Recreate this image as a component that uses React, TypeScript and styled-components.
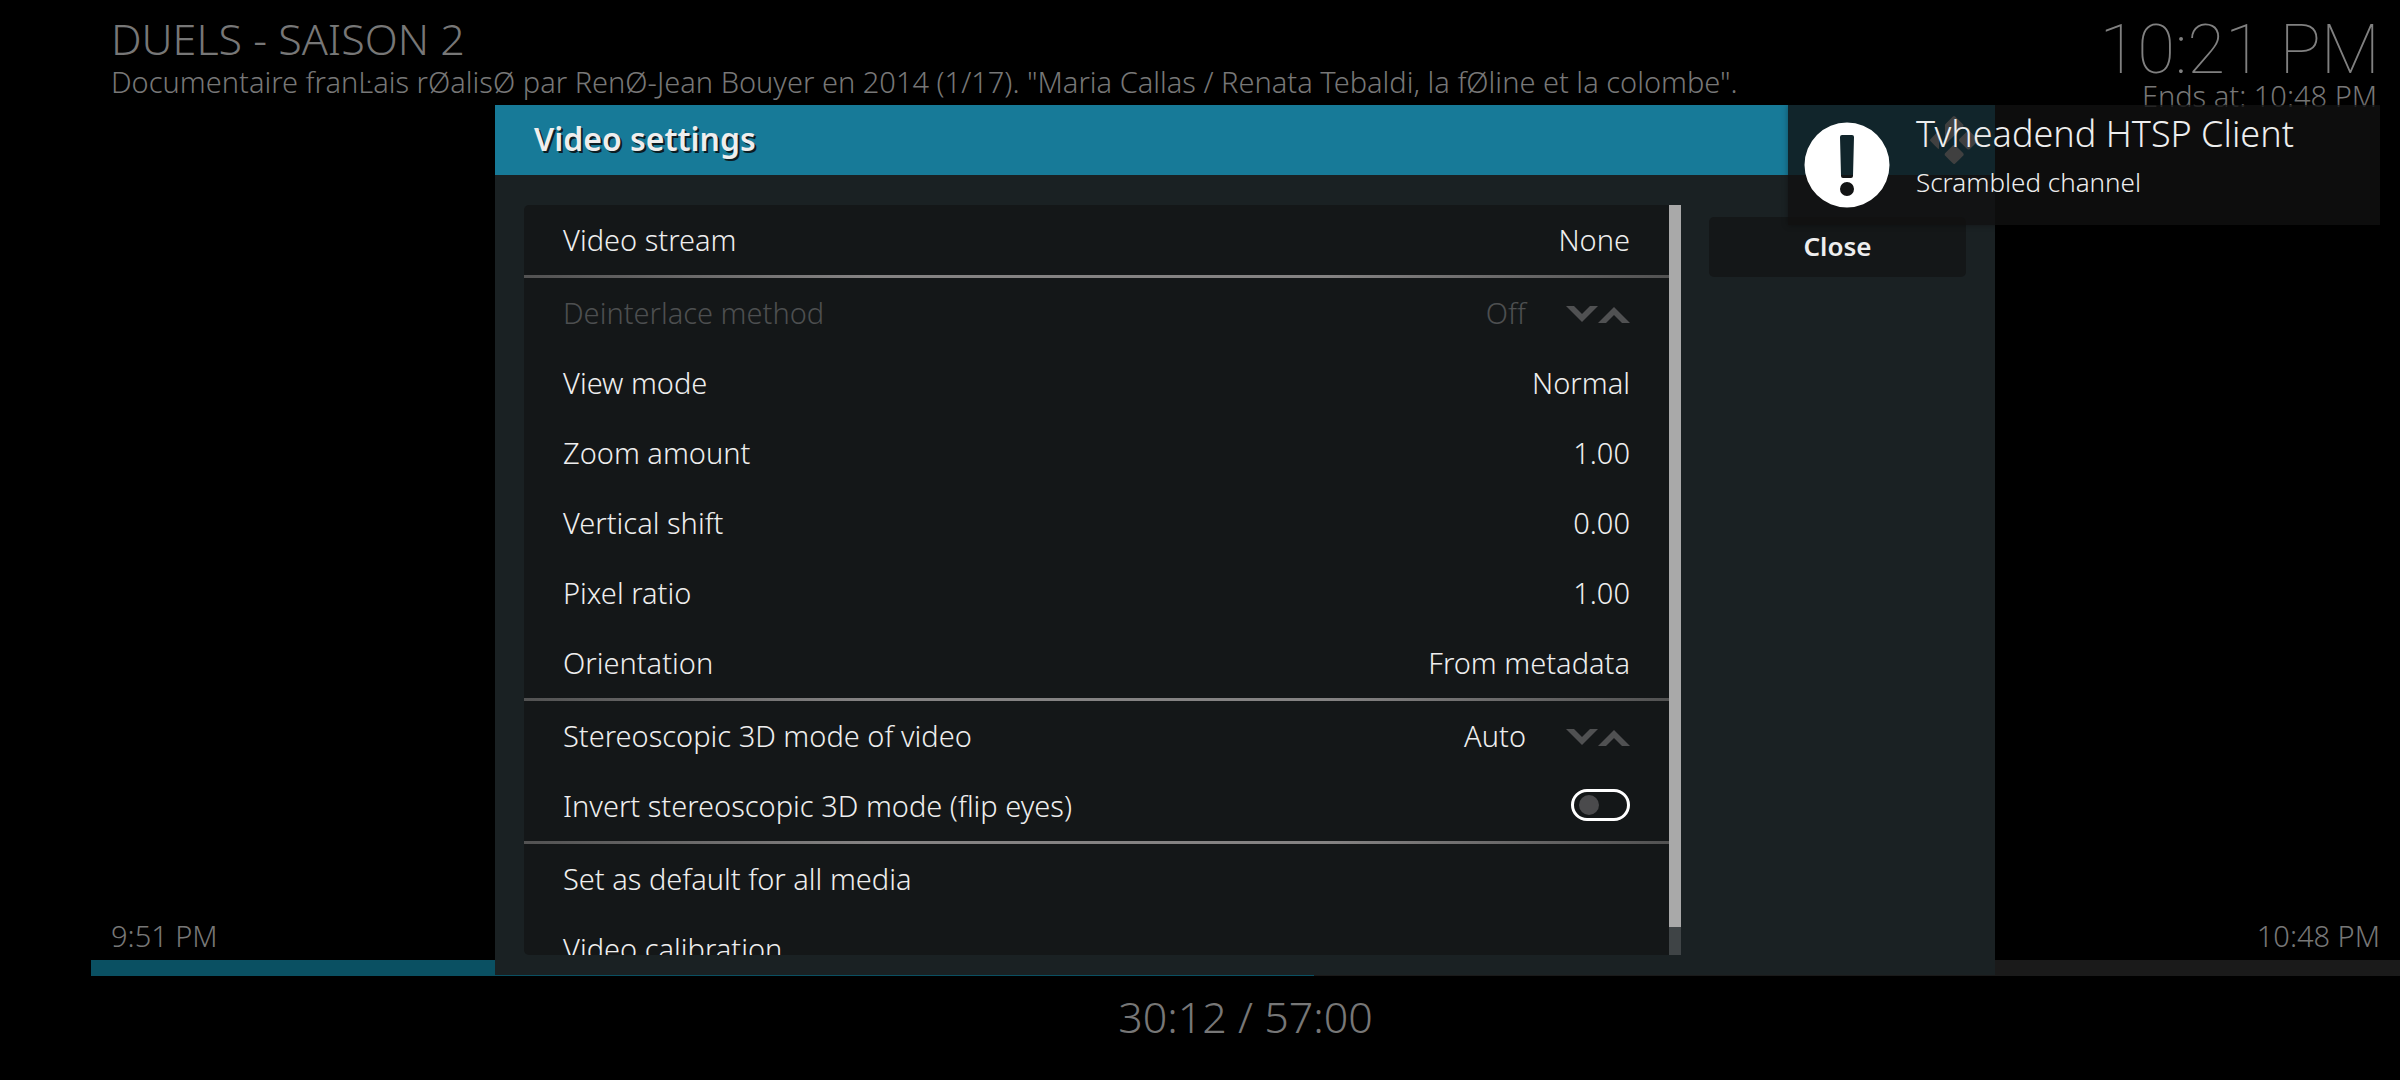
import React, { useState } from "react";
import styled, { createGlobalStyle } from "styled-components";
import { SiKodi } from "react-icons/si";

const GlobalStyle = createGlobalStyle`
  *, *::before, *::after { box-sizing: border-box; }
  body {
    margin: 0;
    background: #000;
    color: #777;
    font-family: "Noto Sans", "Open Sans", sans-serif;
    font-size: 29px;
    font-weight: 300;
  }
  h1, h2, p { margin: 0; font-weight: inherit; }
  button { font: inherit; color: inherit; background: none; border: 0; padding: 0; }
`;

/* On-screen display behind the dialog */

const Screen = styled.main`
  position: relative;
  display: flex;
  flex-direction: column;
  justify-content: space-between;
  min-height: 100vh;
  padding-left: 91px;
`;

const OsdHeader = styled.header`
  display: flex;
  justify-content: space-between;
  gap: 40px;
  padding: 16px 20px 0;
`;

const NowPlaying = styled.div`
  min-width: 0;
`;

const Title = styled.h1`
  font-size: 43px;
  line-height: 46px;
`;

const Plot = styled.p`
  line-height: 40px;
  white-space: nowrap;
  overflow: hidden;
  text-overflow: ellipsis;
`;

const ClockArea = styled.div`
  padding-top: 4px;
  text-align: right;
  white-space: nowrap;
`;

const Clock = styled.p`
  font-family: Roboto, sans-serif;
  font-size: 69px;
  font-weight: 100;
  line-height: 60px;
  color: #808080;
`;

const EndsAt = styled.p`
  padding-right: 3px;
  line-height: 32px;
`;

const OsdFooter = styled.footer`
  padding-bottom: 22px;
`;

const TimeSpan = styled.div`
  display: flex;
  justify-content: space-between;
  padding: 0 20px;
  line-height: 48px;
`;

const ProgressTrack = styled.div`
  height: 16px;
  background: #1a1a1a;
`;

const ProgressFill = styled.div`
  height: 100%;
  background: #0a5062;
`;

const Elapsed = styled.p`
  font-size: 43px;
  line-height: 82px;
  text-align: center;
`;

/* Settings dialog */

const DialogLayer = styled.div`
  position: absolute;
  inset: 0;
  display: flex;
  align-items: center;
  justify-content: center;
  padding-left: 90px;
`;

const Dialog = styled.section`
  width: min(1500px, 100%);
  background: #1a2123;
  color: #eee;
`;

const DialogHeader = styled.header`
  display: flex;
  align-items: center;
  justify-content: space-between;
  height: 70px;
  padding: 0 17px 0 39px;
  background: #177a98;
`;

const DialogTitle = styled.h2`
  padding-bottom: 4px;
  font-size: 32px;
  font-weight: 600;
  text-shadow: 2px 2px 0 #0b1d24;
`;

const DialogBody = styled.div`
  display: grid;
  grid-template-columns: minmax(0, 1fr) 257px;
  gap: 28px;
  padding: 30px 29px 20px;
`;

const ListFrame = styled.div`
  display: grid;
  grid-template-columns: minmax(0, 1fr) 12px;
  height: min(750px, calc(100vh - 330px));
`;

const List = styled.div`
  overflow: hidden;
  border-radius: 5px 0 0 5px;
  background: #141718;
`;

const Group = styled.div`
  & + & {
    border-top: 3px solid;
    border-image: linear-gradient(90deg, #525252, #858383 30%, #858383 70%, #525252) 1;
  }
`;

const Row = styled.div<{ $disabled?: boolean }>`
  display: flex;
  align-items: center;
  justify-content: space-between;
  width: 100%;
  height: 70px;
  padding: 0 39px 2px;
  color: ${(p) => (p.$disabled ? "#4d4f50" : "inherit")};
`;

const Spinner = styled.div`
  display: flex;
  align-items: center;
`;

const SpinnerValue = styled.output`
  padding-right: 40px;
`;

const Arrow = styled.button`
  display: flex;
  width: 32px;
  height: 22px;
  color: #505152;
`;

const Toggle = styled.input`
  appearance: none;
  display: flex;
  align-items: center;
  width: 59px;
  height: 32px;
  margin: 0;
  padding: 0 5px;
  border: 3px solid #fff;
  border-radius: 16px;

  &::before {
    content: "";
    width: 20px;
    height: 20px;
    border-radius: 50%;
    background: #4a4a4c;
  }
  &:checked { justify-content: flex-end; }
  &:checked::before { background: #fff; }
`;

const ScrollTrack = styled.div`
  background: #3f4446;
`;

const ScrollThumb = styled.div`
  background: #a9a9a9;
`;

const Actions = styled.div`
  padding-top: 12px;
`;

const CloseButton = styled.button`
  width: 100%;
  height: 60px;
  padding-bottom: 3px;
  border-radius: 5px;
  background: #141718;
  font-size: 26px;
  font-weight: 600;
`;

/* Notification */

const Toast = styled.aside`
  position: absolute;
  top: 105px;
  right: 20px;
  display: flex;
  gap: 26px;
  width: 592px;
  height: 120px;
  padding: 4px 16px;
  background: rgba(16, 16, 16, 0.8);
  box-shadow: 0 0 6px rgba(0, 0, 0, 0.35);
  color: #eee;
`;

const ToastIcon = styled.svg`
  flex: none;
  align-self: center;
  width: 86px;
  height: 86px;
`;

const ToastTitle = styled.h2`
  font-size: 36px;
  line-height: 50px;
`;

const ToastText = styled.p`
  font-size: 26px;
  line-height: 46px;
`;

type Setting =
  | { kind: "value"; label: string; value?: string }
  | { kind: "spinner"; label: string; value: string; disabled?: boolean }
  | { kind: "toggle"; label: string };

const groups: Setting[][] = [
  [{ kind: "value", label: "Video stream", value: "None" }],
  [
    { kind: "spinner", label: "Deinterlace method", value: "Off", disabled: true },
    { kind: "value", label: "View mode", value: "Normal" },
    { kind: "value", label: "Zoom amount", value: "1.00" },
    { kind: "value", label: "Vertical shift", value: "0.00" },
    { kind: "value", label: "Pixel ratio", value: "1.00" },
    { kind: "value", label: "Orientation", value: "From metadata" },
  ],
  [
    { kind: "spinner", label: "Stereoscopic 3D mode of video", value: "Auto" },
    { kind: "toggle", label: "Invert stereoscopic 3D mode (flip eyes)" },
  ],
  [
    { kind: "value", label: "Set as default for all media" },
    { kind: "value", label: "Video calibration" },
  ],
];

function SpinnerRow({ label, value, disabled }: { label: string; value: string; disabled?: boolean }) {
  return (
    <Row $disabled={disabled} role="group" aria-label={label}>
      <span>{label}</span>
      <Spinner>
        <SpinnerValue>{value}</SpinnerValue>
        <Arrow type="button" disabled={disabled} aria-label="Previous">
          <svg viewBox="0 0 32 22" width="32" height="22" fill="currentColor">
            <path d="M0 5H8L16 13L24 5H32L16 21Z" />
          </svg>
        </Arrow>
        <Arrow type="button" disabled={disabled} aria-label="Next">
          <svg viewBox="0 0 32 22" width="32" height="22" fill="currentColor">
            <path d="M0 22H8L16 14L24 22H32L16 6Z" />
          </svg>
        </Arrow>
      </Spinner>
    </Row>
  );
}

function ToggleRow({ label }: { label: string }) {
  const [on, setOn] = useState(false);
  return (
    <Row as="label">
      <span>{label}</span>
      <Toggle type="checkbox" checked={on} onChange={(e) => setOn(e.target.checked)} />
    </Row>
  );
}

function SettingRow({ setting }: { setting: Setting }) {
  if (setting.kind === "spinner") {
    return <SpinnerRow label={setting.label} value={setting.value} disabled={setting.disabled} />;
  }
  if (setting.kind === "toggle") return <ToggleRow label={setting.label} />;
  return (
    <Row as="button">
      <span>{setting.label}</span>
      {setting.value && <span>{setting.value}</span>}
    </Row>
  );
}

const elapsedSeconds = 30 * 60 + 12;
const totalSeconds = 57 * 60;
const visibleShare = 722 / 750;

export default function App() {
  return (
    <>
      <GlobalStyle />
      <Screen>
        <OsdHeader>
          <NowPlaying>
            <Title>DUELS - SAISON 2</Title>
            <Plot>
              Documentaire franĿais rØalisØ par RenØ-Jean Bouyer en 2014 (1/17). "Maria Callas / Renata
              Tebaldi, la fØline et la colombe".
            </Plot>
          </NowPlaying>
          <ClockArea>
            <Clock>10:21 PM</Clock>
            <EndsAt>Ends at: 10:48 PM</EndsAt>
          </ClockArea>
        </OsdHeader>
        <OsdFooter>
          <TimeSpan>
            <span>9:51 PM</span>
            <span>10:48 PM</span>
          </TimeSpan>
          <ProgressTrack>
            <ProgressFill style={{ width: `${(elapsedSeconds / totalSeconds) * 100}%` }} />
          </ProgressTrack>
          <Elapsed>30:12 / 57:00</Elapsed>
        </OsdFooter>

        <DialogLayer>
          <Dialog role="dialog" aria-labelledby="dialog-title">
            <DialogHeader>
              <DialogTitle id="dialog-title">Video settings</DialogTitle>
              <SiKodi size={48} color="#fff" aria-hidden />
            </DialogHeader>
            <DialogBody>
              <ListFrame>
                <List>
                  {groups.map((group, i) => (
                    <Group key={i}>
                      {group.map((setting) => (
                        <SettingRow key={setting.label} setting={setting} />
                      ))}
                    </Group>
                  ))}
                </List>
                <ScrollTrack>
                  <ScrollThumb style={{ height: `${visibleShare * 100}%` }} />
                </ScrollTrack>
              </ListFrame>
              <Actions>
                <CloseButton type="button">Close</CloseButton>
              </Actions>
            </DialogBody>
          </Dialog>
        </DialogLayer>

        <Toast role="status">
          <ToastIcon viewBox="0 0 86 86" fill="#fff" aria-hidden>
            <path
              fillRule="evenodd"
              d="M43 0.5a42.5 42.5 0 1 0 0 85a42.5 42.5 0 1 0 0-85Z M38 13H48Q50 13 50 15L49 54Q49 56 47 56H39Q37 56 37 54L36 15Q36 13 38 13Z M43 60a7 7 0 1 1 0 14a7 7 0 1 1 0-14Z"
            />
          </ToastIcon>
          <div>
            <ToastTitle>Tvheadend HTSP Client</ToastTitle>
            <ToastText>Scrambled channel</ToastText>
          </div>
        </Toast>
      </Screen>
    </>
  );
}
